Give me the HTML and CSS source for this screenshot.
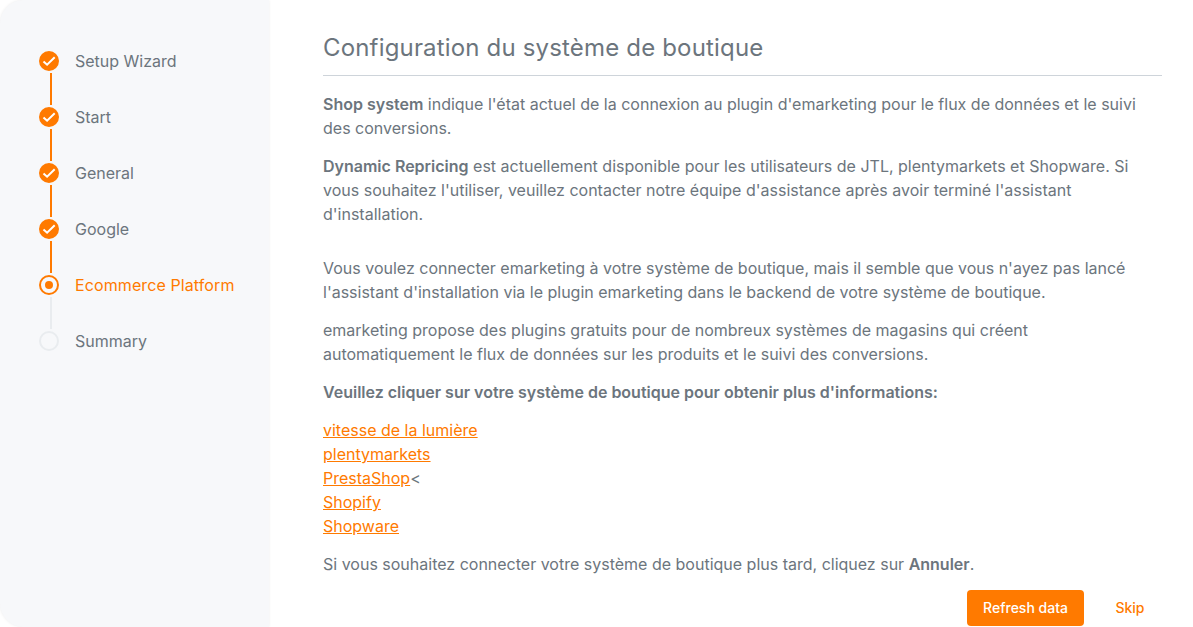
FILE: index.html
```html
<!DOCTYPE html>
<html lang="en">
<head>
    <meta charset="UTF-8">
    <meta name="viewport" content="width=device-width, initial-scale=1.0">
    <title>Setup Wizard</title>
    <link rel="stylesheet" href="styles.css">
</head>
<body>
    <div class="wizard">
        <aside class="sidebar">
            <ul class="steps">
                <li class="step done">
                    <span class="step-icon"><svg viewBox="0 0 20 20"><path d="M4.5 10.4l3.6 3.3 7.6-7.4"/></svg></span>
                    <span class="step-label">Setup Wizard</span>
                </li>
                <li class="step done">
                    <span class="step-icon"><svg viewBox="0 0 20 20"><path d="M4.5 10.4l3.6 3.3 7.6-7.4"/></svg></span>
                    <span class="step-label">Start</span>
                </li>
                <li class="step done">
                    <span class="step-icon"><svg viewBox="0 0 20 20"><path d="M4.5 10.4l3.6 3.3 7.6-7.4"/></svg></span>
                    <span class="step-label">General</span>
                </li>
                <li class="step done">
                    <span class="step-icon"><svg viewBox="0 0 20 20"><path d="M4.5 10.4l3.6 3.3 7.6-7.4"/></svg></span>
                    <span class="step-label">Google</span>
                </li>
                <li class="step current">
                    <span class="step-icon"><span class="step-dot"></span></span>
                    <span class="step-label">Ecommerce Platform</span>
                </li>
                <li class="step">
                    <span class="step-icon"></span>
                    <span class="step-label">Summary</span>
                </li>
            </ul>
        </aside>

        <main class="content">
            <h1>Configuration du système de boutique</h1>

            <p><strong>Shop system</strong> indique l'état actuel de la connexion au plugin d'emarketing pour le flux de données et le suivi des conversions.</p>
            <p class="gap-after"><strong>Dynamic Repricing</strong> est actuellement disponible pour les utilisateurs de JTL, plentymarkets et Shopware. Si vous souhaitez l'utiliser, veuillez contacter notre équipe d'assistance après avoir terminé l'assistant d'installation.</p>
            <p>Vous voulez connecter emarketing à votre système de boutique, mais il semble que vous n'ayez pas lancé l'assistant d'installation via le plugin emarketing dans le backend de votre système de boutique.</p>
            <p>emarketing propose des plugins gratuits pour de nombreux systèmes de magasins qui créent automatiquement le flux de données sur les produits et le suivi des conversions.</p>
            <p><strong>Veuillez cliquer sur votre système de boutique pour obtenir plus d'informations:</strong></p>
            <p>
                <a href="#">vitesse de la lumière</a><br>
                <a href="#">plentymarkets</a><br>
                <a href="#">PrestaShop</a>&lt;<br>
                <a href="#">Shopify</a><br>
                <a href="#">Shopware</a>
            </p>
            <p>Si vous souhaitez connecter votre système de boutique plus tard, cliquez sur <strong>Annuler</strong>.</p>

            <div class="actions">
                <button class="btn-primary">Refresh data</button>
                <button class="btn-link">Skip</button>
            </div>
        </main>
    </div>
</body>
</html>
```

FILE: styles.css
```css
html, body {
    height: 100%;
}

body {
    margin: 0;
    font-family: 'Inter', 'Liberation Sans', sans-serif;
    font-size: 16px;
    line-height: 24px;
    color: #6c757d;
    background-color: #fff;
    overflow: hidden;
}

.wizard {
    display: flex;
    height: 627px;
}

.sidebar {
    width: 269px;
    flex-shrink: 0;
    box-sizing: border-box;
    padding: 33px 0 0 39px;
    background-color: #f7f8fa;
    border-radius: 24px 0 0 24px;
    box-shadow: 0 0 3px rgba(0, 0, 0, 0.08);
}

.steps {
    list-style: none;
    margin: 0;
    padding: 0;
}

.step {
    position: relative;
    display: flex;
    align-items: center;
    gap: 16px;
    height: 56px;
}

/* line down to the next step */
.step:not(:last-child)::after {
    content: "";
    position: absolute;
    left: 11px;
    top: 40px;
    width: 2px;
    height: 32px;
    background-color: #e9ecef;
}

.step.done::after {
    background-color: #ff7a00;
}

.step-icon {
    display: flex;
    align-items: center;
    justify-content: center;
    box-sizing: border-box;
    width: 20px;
    height: 20px;
    border: 2px solid #e9ecef;
    border-radius: 50%;
}

.step-icon svg {
    width: 20px;
    height: 20px;
    flex-shrink: 0;
    fill: none;
    stroke: #fff;
    stroke-width: 2;
}

.step.done .step-icon {
    background-color: #ff7a00;
    border-color: #ff7a00;
}

.step.current .step-icon {
    border-color: #ff7a00;
}

.step-dot {
    width: 8px;
    height: 8px;
    border-radius: 50%;
    background-color: #ff7a00;
}

.step.current .step-label {
    color: #ff7a00;
    letter-spacing: 0.1px;
}

.content {
    flex: 1;
    padding: 29px 31px 0 54px;
}

h1 {
    margin: 0 0 16px;
    padding-bottom: 9px;
    font-size: 24px;
    line-height: 37px;
    font-weight: 400;
    letter-spacing: 0.17px;
    color: #6c757d;
    border-bottom: 1px solid #ced4da;
}

p {
    margin: 0 0 14px;
}

.gap-after {
    margin-bottom: 30px;
}

strong {
    font-weight: 600;
}

a {
    color: #ff7a00;
}

.actions {
    display: flex;
    justify-content: flex-end;
    align-items: center;
    gap: 7px;
    margin: 12px -7px 0 0;
}

button {
    font-family: inherit;
    font-size: 14px;
    font-weight: 500;
    line-height: 20px;
    height: 36px;
    border: none;
    border-radius: 4px;
    cursor: pointer;
}

.btn-primary {
    width: 117px;
    color: #fff;
    background-color: #ff7a00;
}

.btn-link {
    width: 78px;
    color: #ff7a00;
    background-color: transparent;
}
```
